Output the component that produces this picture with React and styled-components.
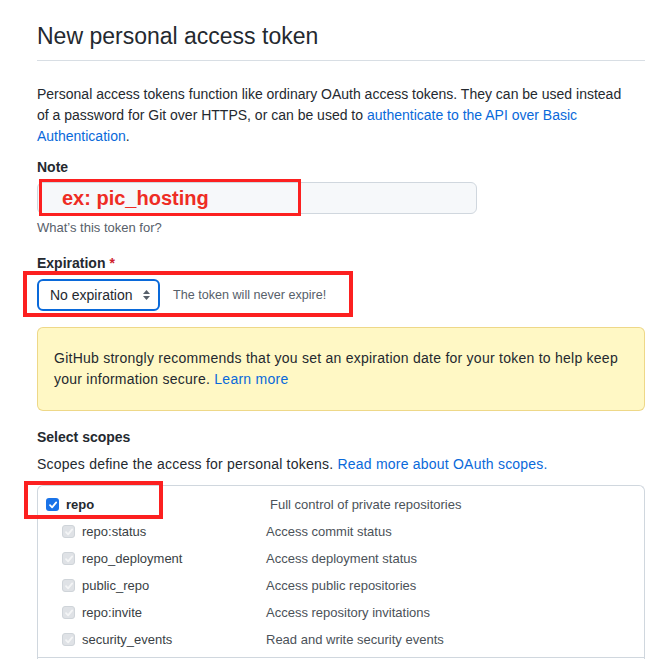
import React from "react";
import styled, { createGlobalStyle } from "styled-components";

const Global = createGlobalStyle`
  html, body { margin: 0; padding: 0; background: #ffffff; }
  body {
    font-family: "Liberation Sans", Arial, sans-serif;
    color: #24292f;
    font-size: 14px;
    line-height: 21px;
  }
  * { box-sizing: border-box; }
`;

const Page = styled.div`
  width: 608px;
  margin-left: 37px;
  padding-top: 21px;
`;

const Title = styled.h1`
  margin: 0;
  font-size: 23px;
  line-height: 30px;
  font-weight: 400;
  color: #24292f;
  padding-bottom: 9px;
  border-bottom: 1px solid #d8dee4;
`;

const Intro = styled.p`
  margin: 23px 0 0;
  max-width: 596px;
`;

const Link = styled.a`
  color: #0969da;
  text-decoration: none;
`;

const Field = styled.div`
  margin-top: ${(p) => p.$top || 0}px;
`;

const Label = styled.div`
  font-weight: 700;
  font-size: 14px;
  line-height: 21px;
`;

const Req = styled.span`
  color: #cf222e;
  margin-left: 4px;
`;

const Annotated = styled.div`
  position: relative;
  margin-top: ${(p) => p.$top || 0}px;
`;

const RedFrame = styled.div`
  position: absolute;
  left: ${(p) => p.$l}px;
  top: ${(p) => p.$t}px;
  width: ${(p) => p.$w}px;
  height: ${(p) => p.$h}px;
  border: ${(p) => p.$b || 4}px solid #fc2020;
  pointer-events: none;
`;

const NoteInput = styled.div`
  width: 440px;
  height: 32px;
  background: #f6f8fa;
  border: 1px solid #d0d7de;
  border-radius: 6px;
`;

const Hint = styled.div`
  position: absolute;
  left: 25px;
  top: 0;
  height: 32px;
  display: flex;
  align-items: center;
  font-weight: 700;
  font-size: 20px;
  color: #ee2c24;
`;

const Note = styled.div`
  margin-top: 5px;
  font-size: 13px;
  line-height: 18px;
  color: #57606a;
`;

const SelectRow = styled.div`
  display: flex;
  align-items: center;
  gap: 13px;
`;

const Select = styled.div`
  width: 123px;
  height: 32px;
  border: 2px solid #0969da;
  border-radius: 6px;
  display: flex;
  align-items: center;
  justify-content: space-between;
  padding: 0 7px 0 11px;
  font-size: 14px;
  color: #24292f;
`;

const Muted = styled.span`
  font-size: 12.6px;
  color: #57606a;
`;

const Flash = styled.div`
  margin-top: 16px;
  background: #fff8c5;
  border: 1px solid rgba(212, 167, 44, 0.4);
  border-radius: 6px;
  padding: 20px 16px;
  letter-spacing: 0.25px;
`;

const Heading = styled.div`
  margin-top: 16px;
  font-weight: 700;
  font-size: 14px;
  line-height: 21px;
`;

const Para = styled.p`
  margin: 6px 0 0;
  letter-spacing: 0.22px;
`;

const ScopeBox = styled.div`
  margin-top: 10px;
  border: 1px solid #d0d7de;
  border-bottom: none;
  border-radius: 6px 6px 0 0;
  height: 180px;
`;

const Group = styled.div`
  padding: 5px 0 4px;
  border-bottom: 1px solid #d0d7de;
`;

const Row = styled.div`
  position: relative;
  display: grid;
  grid-template-columns: ${(p) => (p.$sub ? "204px" : "224px")} 1fr;
  align-items: center;
  height: 27px;
  padding-left: ${(p) => (p.$sub ? 24 : 8)}px;
  font-size: 13px;
`;

const Name = styled.label`
  display: flex;
  align-items: center;
  gap: 7px;
  font-weight: ${(p) => (p.$main ? 700 : 400)};
  font-size: 13px;
  color: ${(p) => (p.$main ? "#24292f" : "#3a3f45")};
`;

const Desc = styled.span`
  color: #4b5259;
`;

const Box = styled.span`
  width: 13px;
  height: 13px;
  border-radius: 3px;
  display: inline-flex;
  align-items: center;
  justify-content: center;
  background: ${(p) => (p.$disabled ? "#dfe2e6" : "#1a73e8")};
  border: ${(p) => (p.$disabled ? "1px solid #cfd4d9" : "none")};
`;

const Check = ({ disabled }) => (
  <Box $disabled={disabled}>
    <svg width="10" height="10" viewBox="0 0 10 10">
      <path
        d="M2 5.2 L4.1 7.3 L8.2 2.4"
        fill="none"
        stroke={disabled ? "#f4f5f6" : "#ffffff"}
        strokeWidth="1.8"
        strokeLinecap="round"
        strokeLinejoin="round"
      />
    </svg>
  </Box>
);

const Arrows = () => (
  <svg width="9" height="12" viewBox="0 0 9 12">
    <path d="M4.5 1 L8 5 L1 5 Z" fill="#57606a" />
    <path d="M4.5 11 L8 7 L1 7 Z" fill="#57606a" />
  </svg>
);

const scopes = [
  ["repo:status", "Access commit status"],
  ["repo_deployment", "Access deployment status"],
  ["public_repo", "Access public repositories"],
  ["repo:invite", "Access repository invitations"],
  ["security_events", "Read and write security events"],
];

export default function App() {
  return (
    <>
      <Global />
      <Page>
        <Title>New personal access token</Title>
        <Intro>
          Personal access tokens function like ordinary OAuth access tokens. They can be used instead
          of a password for Git over HTTPS, or can be used to{" "}
          <Link href="#">authenticate to the API over Basic Authentication</Link>.
        </Intro>

        <Field $top={10}>
          <Label>Note</Label>
          <Annotated $top={4}>
            <NoteInput />
            <Hint>ex: pic_hosting</Hint>
            <RedFrame $l={2} $t={-3} $w={262} $h={37} $b={3} />
          </Annotated>
          <Note>What’s this token for?</Note>
        </Field>

        <Field $top={16}>
          <Label>
            Expiration<Req>*</Req>
          </Label>
          <Annotated $top={5}>
            <SelectRow>
              <Select>
                No expiration
                <Arrows />
              </Select>
              <Muted>The token will never expire!</Muted>
            </SelectRow>
            <RedFrame $l={-14} $t={-8} $w={330} $h={46} />
          </Annotated>
        </Field>

        <Flash>
          GitHub strongly recommends that you set an expiration date for your token to help keep
          your information secure. <Link href="#">Learn more</Link>
        </Flash>

        <Heading>Select scopes</Heading>
        <Para>
          Scopes define the access for personal tokens.{" "}
          <Link href="#">Read more about OAuth scopes.</Link>
        </Para>

        <ScopeBox>
          <Group>
            <Row>
              <Name $main>
                <Check />
                repo
              </Name>
              <Desc>Full control of private repositories</Desc>
              <RedFrame $l={-14} $t={-10} $w={139} $h={38} />
            </Row>
            {scopes.map(([n, d]) => (
              <Row $sub key={n}>
                <Name>
                  <Check disabled />
                  {n}
                </Name>
                <Desc>{d}</Desc>
              </Row>
            ))}
          </Group>
        </ScopeBox>
      </Page>
    </>
  );
}
